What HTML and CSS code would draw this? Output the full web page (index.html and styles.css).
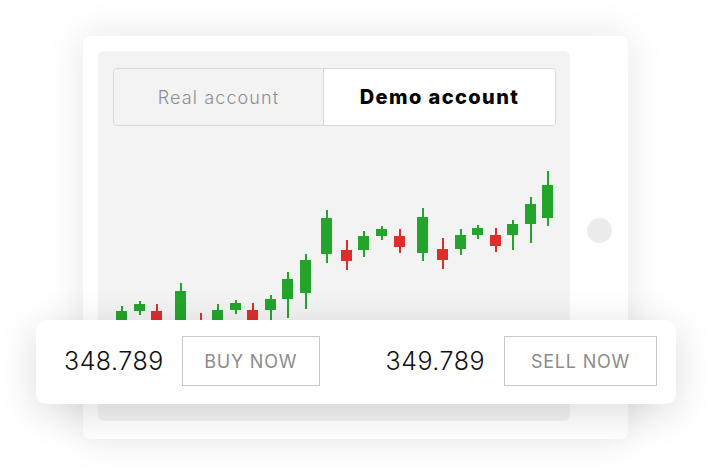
FILE: index.html
```html
<!DOCTYPE html>
<html>
<head>
<meta charset="utf-8">
<link rel="stylesheet" href="styles.css">
</head>
<body>
<div class="stage">
  <div class="tablet">
    <div class="screen">
      <div class="tabs">
        <div class="tab tab-real">Real account</div>
        <div class="tab tab-demo">Demo account</div>
      </div>
      <svg class="chart" width="472" height="295" viewBox="98 126 472 295">
        <g class="up">
          <rect x="121" y="306" width="2" height="30"/><rect x="116" y="311" width="11" height="25"/>
          <rect x="139" y="301" width="2" height="14"/><rect x="134" y="304" width="11" height="7"/>
          <rect x="180" y="283" width="2" height="50"/><rect x="175" y="291" width="11" height="42"/>
          <rect x="217" y="304" width="2" height="30"/><rect x="212" y="310" width="11" height="24"/>
          <rect x="235" y="300" width="2" height="14"/><rect x="230" y="303" width="11" height="7"/>
          <rect x="270" y="295" width="2" height="40"/><rect x="265" y="299" width="11" height="11"/>
          <rect x="287" y="272" width="2" height="46"/><rect x="282" y="279" width="11" height="20"/>
          <rect x="305" y="254" width="2" height="55"/><rect x="300" y="260" width="11" height="33"/>
          <rect x="326" y="210" width="2" height="53"/><rect x="321" y="218" width="11" height="36"/>
          <rect x="363" y="231" width="2" height="26"/><rect x="358" y="236" width="11" height="14"/>
          <rect x="381" y="226" width="2" height="14"/><rect x="376" y="229" width="11" height="7"/>
          <rect x="422" y="208" width="2" height="53"/><rect x="417" y="217" width="11" height="36"/>
          <rect x="460" y="229" width="2" height="26"/><rect x="455" y="235" width="11" height="14"/>
          <rect x="477" y="225" width="2" height="14"/><rect x="472" y="228" width="11" height="7"/>
          <rect x="512" y="220" width="2" height="30"/><rect x="507" y="224" width="11" height="11"/>
          <rect x="530" y="197" width="2" height="46"/><rect x="525" y="204" width="11" height="20"/>
          <rect x="547" y="171" width="2" height="55"/><rect x="542" y="185" width="11" height="33"/>
        </g>
        <g class="down">
          <rect x="156" y="304" width="2" height="30"/><rect x="151" y="311" width="11" height="23"/>
          <rect x="200" y="313" width="2" height="25"/><rect x="196" y="322" width="11" height="12"/>
          <rect x="252" y="303" width="2" height="30"/><rect x="247" y="310" width="11" height="23"/>
          <rect x="346" y="240" width="2" height="30"/><rect x="341" y="250" width="11" height="11"/>
          <rect x="399" y="229" width="2" height="24"/><rect x="394" y="236" width="11" height="11"/>
          <rect x="442" y="238" width="2" height="31"/><rect x="437" y="249" width="11" height="11"/>
          <rect x="495" y="228" width="2" height="24"/><rect x="490" y="235" width="11" height="11"/>
        </g>
      </svg>
    </div>
    <div class="side">
      <div class="home-button"></div>
    </div>
    <div class="trade-card">
      <div class="trade-group">
        <span class="price">348.789</span>
        <button class="action action-buy">BUY NOW</button>
      </div>
      <div class="trade-group">
        <span class="price">349.789</span>
        <button class="action action-sell">SELL NOW</button>
      </div>
    </div>
  </div>
</div>
</body>
</html>
```

FILE: styles.css
```css
* { box-sizing: border-box; }
html, body { margin: 0; padding: 0; background: #ffffff; }
body { font-family: "Inter", "Open Sans", sans-serif; }

.stage {
  width: 712px;
  height: 476px;
  padding: 36px 0 0 83px;
  overflow: hidden;
}

.tablet {
  position: relative;
  width: 545px;
  height: 403px;
  background: #ffffff;
  border-radius: 7px;
  box-shadow: 0 0 40px rgba(0, 0, 0, 0.1);
  padding: 15px 0 18px 15px;
  display: flex;
}

.screen {
  width: 472px;
  height: 370px;
  background: #f3f3f3;
  border-radius: 6px;
  padding-top: 17px;
  overflow: hidden;
}

.tabs {
  display: flex;
  height: 58px;
  margin: 0 14px 0 15px;
  border: 1px solid #d8d8d8;
  border-radius: 4px;
  overflow: hidden;
}

.tab {
  display: flex;
  align-items: center;
  justify-content: center;
}

.tab-real {
  width: 210px;
  background: #f3f3f3;
  color: #8e8e8e;
  font-size: 18px;
  font-weight: 300;
  letter-spacing: 1.1px;
  border-right: 1px solid #d8d8d8;
}

.tab-demo {
  flex: 1;
  background: #ffffff;
  color: #000000;
  font-weight: 800;
  font-size: 20px;
  letter-spacing: 1.4px;
}

.chart { display: block; }
.chart .up rect { fill: #23a52b; }
.chart .down rect { fill: #dc2e2b; }

.side {
  flex: 1;
  display: flex;
  align-items: center;
  justify-content: center;
  padding-bottom: 12px;
}

.home-button {
  width: 25px;
  height: 25px;
  border-radius: 50%;
  background: #ececec;
}

.trade-card {
  position: absolute;
  left: -47px;
  top: 284px;
  width: 640px;
  height: 84px;
  background: #ffffff;
  border-radius: 10px;
  box-shadow: 0 8px 40px rgba(0, 0, 0, 0.14);
  display: flex;
  align-items: center;
  justify-content: space-between;
  padding: 0 19px 2px 28px;
}

.trade-group {
  display: flex;
  align-items: center;
  gap: 19px;
}

.trade-group:first-child { gap: 18px; }

.price {
  font-size: 25px;
  font-weight: 300;
  letter-spacing: 0.5px;
  color: #111111;
}

.action {
  height: 50px;
  background: #ffffff;
  border: 1px solid #c9c9c9;
  border-radius: 0;
  color: #8c8c8c;
  font-family: "Inter", "Open Sans", sans-serif;
  font-size: 18px;
  font-weight: 400;
  letter-spacing: 0.8px;
  padding: 0;
}

.action-buy { width: 138px; }
.action-sell { width: 153px; }
```
